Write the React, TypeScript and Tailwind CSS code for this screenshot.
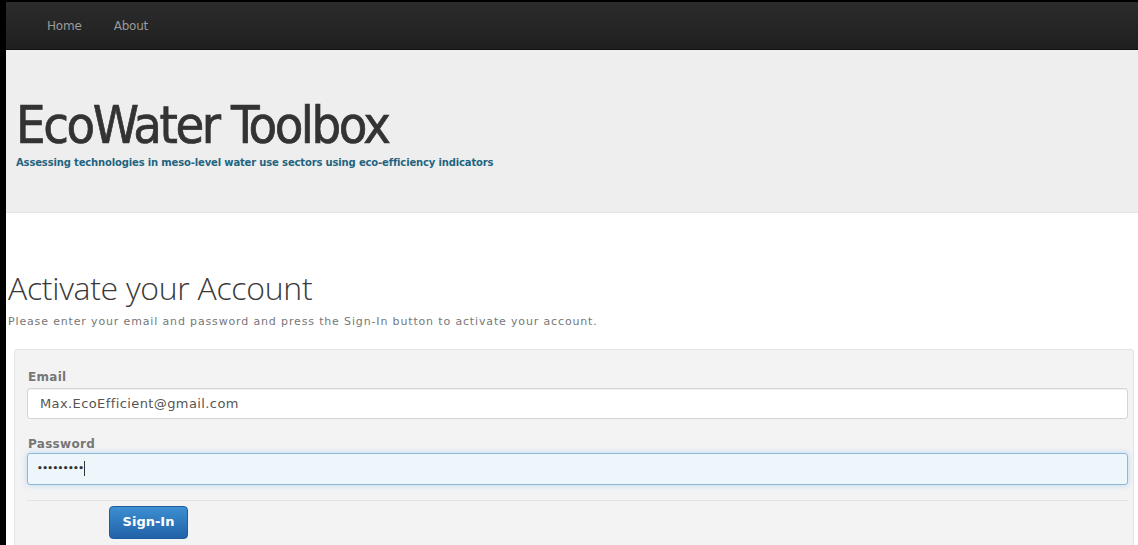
import React from 'react';

const sans = { fontFamily: '"DejaVu Sans", Verdana, sans-serif' };

export default function App() {
  return (
    <div className="w-[1138px] h-[545px] overflow-hidden bg-black pt-[2px] pl-[6px]" style={sans}>
      <div className="h-full bg-white flex flex-col">
        {/* top navbar */}
        <div className="h-[48px] shrink-0 bg-gradient-to-b from-[#2c2c2c] to-[#1f1f1f] border-b border-[#111] flex items-center pl-[41px] gap-[32px] text-[12px] text-[#9a9a9a] tracking-[-0.2px]">
          <span>Home</span>
          <span>About</span>
        </div>

        {/* hero */}
        <div className="h-[163px] shrink-0 bg-[#eeeeee] pl-[10px] pt-[46px] border-b border-[#e6e6e6]">
          <h1
            className="text-[52px] leading-[58px] text-[#333] tracking-[-2.4px] [-webkit-text-stroke:0.7px_#333]"
            style={{ fontFamily: '"DejaVu Sans Condensed", "DejaVu Sans", sans-serif' }}
          >
            EcoWater Toolbox
          </h1>
          <p className="text-[10px] font-bold text-[#1f6480] mt-[1px] tracking-[-0.15px]">Assessing technologies in meso-level water use sectors using eco-efficiency indicators</p>
        </div>

        {/* content */}
        <div className="flex-1 pt-[56px] pl-[2px] pr-[4px]">
          <h2 className="text-[32px] leading-[38px] font-light text-[#3a3a3a] tracking-[-0.3px]" style={{ fontFamily: '"Open Sans", sans-serif' }}>Activate your Account</h2>
          <p className="text-[11px] text-[#777] mt-[7px] tracking-[0.85px]">Please enter your email and password and press the Sign-In button to activate your account.</p>

          <form className="mt-[18px] ml-[6px] bg-[#f3f3f4] border border-[#e4e4e4] rounded-[3px] pt-[19px] pl-[12px] pr-[5px] h-[200px]">
            <label className="block text-[12px] font-bold text-[#777] leading-[16px] ml-[1px] tracking-[0.3px]">Email</label>
            <input
              type="text"
              defaultValue="Max.EcoEfficient@gmail.com"
              className="mt-[3px] w-full h-[31px] bg-white border border-[#d4d4d4] rounded-[3px] px-[12px] text-[13px] text-[#555] tracking-[0.4px] shadow-[inset_0_1px_1px_rgba(0,0,0,0.06)] outline-none"
              style={sans}
            />
            <label className="block text-[12px] font-bold text-[#777] leading-[16px] mt-[17px] ml-[1px] tracking-[0.3px]">Password</label>
            <div className="mt-[1px] w-full h-[32px] bg-[#edf6fb] border border-[#8fb8d6] rounded-[3px] px-[9px] flex items-center shadow-[0_0_6px_rgba(82,168,236,0.35)]">
              <span className="text-[9px] font-bold text-[#333] tracking-[-0.6px] leading-none">•••••••••</span>
              <span className="w-[1px] h-[15px] bg-[#333] ml-[1px]" />
            </div>
            <div className="mt-[15px] border-t border-[#e2e2e2] pt-[5px] pl-[82px]">
              <button
                type="button"
                className="w-[79px] h-[33px] rounded-[4px] bg-gradient-to-b from-[#3d8fd3] to-[#2162a7] border border-[#1f5c9c] text-white text-[13px] font-bold"
                style={sans}
              >
                Sign-In
              </button>
            </div>
          </form>
        </div>
      </div>
    </div>
  );
}
